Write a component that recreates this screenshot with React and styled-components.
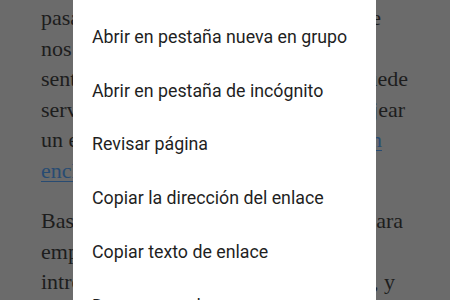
import React from 'react';
import styled, { createGlobalStyle } from 'styled-components';

const GlobalStyle = createGlobalStyle`
  html, body {
    margin: 0;
    padding: 0;
    width: 450px;
    height: 300px;
    overflow: hidden;
    background: #6b6b6b;
  }
`;

const Screen = styled.div`
  position: relative;
  width: 450px;
  height: 300px;
  overflow: hidden;
  background: #6b6b6b;
`;

const Article = styled.div`
  display: flex;
  flex-direction: column;
  gap: 20px;
  padding: 3px 0 0 41px;
  font-family: 'Liberation Serif', 'Times New Roman', serif;
  font-size: 22px;
  color: #1d1d1d;
`;

const Paragraph = styled.div`
  display: flex;
  flex-direction: column;
`;

// each line ends where the reference's ragged edge ends
const Line = styled.div`
  display: flex;
  justify-content: space-between;
  height: 30.5px;
  line-height: 30.5px;
  white-space: nowrap;
  padding-right: ${(p) => 450 - p.$end}px;
`;

const Link = styled.span`
  color: #284b72;
  text-decoration: underline;
  text-decoration-thickness: 1px;
  text-underline-offset: 3px;
`;

const Menu = styled.ul`
  position: absolute;
  top: 0;
  left: 73px;
  width: 303px;
  height: 300px;
  margin: 0;
  padding: 9.5px 0 0;
  list-style: none;
  background: #ffffff;
  box-sizing: border-box;
`;

const Item = styled.li`
  display: flex;
  align-items: center;
  flex-shrink: 0;
  height: 53.75px;
  padding: 0 19px;
  font-family: Roboto, 'Noto Sans', sans-serif;
  font-size: 17.8px;
  color: #1f1f1f;
  white-space: nowrap;
`;

const lines = [
  [
    { left: 'pasamos', right: 'que', end: 381 },
    { left: 'nos', right: '', end: 381 },
    { left: 'sentimos', right: 'puede', end: 408 },
    { left: 'servir', right: 'ojear', end: 405 },
    { left: 'un enlace', right: <Link>en</Link>, end: 382 },
    { left: <Link>enclave</Link>, right: '', end: 382 },
  ],
  [
    { left: 'Bastará', right: 'para', end: 403 },
    { left: 'empezar', right: '', end: 403 },
    { left: 'introducir', right: 'navegador, y', end: 395 },
  ],
];

const items = [
  'Abrir en pestaña nueva en grupo',
  'Abrir en pestaña de incógnito',
  'Revisar página',
  'Copiar la dirección del enlace',
  'Copiar texto de enlace',
  'Descargar enlace',
];

const App = () => {
  return (
    <Screen>
      <GlobalStyle />
      <Article>
        {lines.map((para, i) => (
          <Paragraph key={i}>
            {para.map((l, j) => (
              <Line key={j} $end={l.end}>
                <span>{l.left}</span>
                <span>{l.right}</span>
              </Line>
            ))}
          </Paragraph>
        ))}
      </Article>
      <Menu>
        {items.map((label) => (
          <Item key={label}>{label}</Item>
        ))}
      </Menu>
    </Screen>
  );
};

export default App;
